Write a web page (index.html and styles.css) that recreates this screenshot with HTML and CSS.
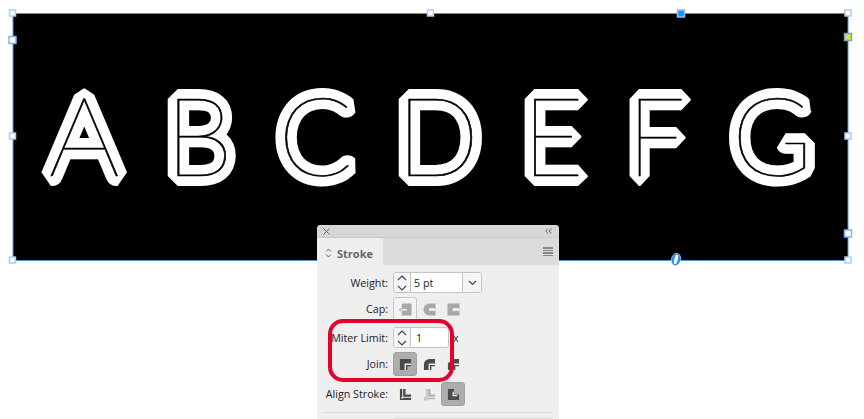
FILE: index.html
```html
<!DOCTYPE html>
<html lang="en">
<head>
<meta charset="utf-8">
<title>Stroke panel</title>
<link rel="stylesheet" href="styles.css">
</head>
<body>
<div class="stage">
  <svg class="art" width="864" height="419" viewBox="0 0 864 419">
    <rect class="plate" x="13" y="13.500" width="835" height="247"/>
    <use class="halo" href="#letters"/>
    <g class="core">
      <g id="letters">
        <text class="glyph" transform="translate(48.500 176) scale(1.020 1)">A</text>
        <text class="glyph" x="165" y="176">B</text>
        <text class="glyph" x="278" y="176">C</text>
        <text class="glyph" x="396" y="176">D</text>
        <text class="glyph" transform="translate(522 176) scale(.970 1)">E</text>
        <text class="glyph" transform="translate(627 176) scale(.940 1)">F</text>
        <text class="glyph" x="731.500" y="176">G</text>
      </g>
    </g>
    <rect class="handle" x="9.500" y="10" width="6" height="6"/>
    <rect class="handle big" x="9" y="36.500" width="7" height="7"/>
    <rect class="handle" x="9.500" y="133" width="6" height="6"/>
    <rect class="handle" x="9.500" y="257" width="6" height="6"/>
    <rect class="handle" x="427.500" y="10" width="6" height="6"/>
    <rect class="handle blue" x="677.500" y="10" width="7" height="7"/>
    <rect class="handle" x="845" y="10" width="6" height="6"/>
    <rect class="handle yellow" x="844.500" y="33.500" width="7" height="7"/>
    <rect class="handle" x="845" y="133" width="6" height="6"/>
    <rect class="handle big" x="844.500" y="230" width="7" height="7"/>
    <rect class="handle" x="845" y="257" width="6" height="6"/>
    <ellipse class="zero-o" cx="676" cy="259.500" rx="4.600" ry="6.200" transform="rotate(14 676 259.500)"/>
    <ellipse class="zero-i" cx="676" cy="259.500" rx="1.700" ry="4.800" transform="rotate(14 676 259.500)"/>
  </svg>

  <svg class="defs" width="0" height="0">
    <symbol id="cap-butt" viewBox="0 0 14 14"><path d="M3 .5h10.500v13H3V8H1.800V6H3z"/><path class="cut" d="M.5 6.500h8v1.800h-8z"/><circle cx="1.500" cy="7.300" r="1.300"/><circle class="cut" cx="1.500" cy="7.300" r=".6"/></symbol>
    <symbol id="cap-round" viewBox="0 0 14 14"><path d="M7 .5h6.500v13H7A6.500 6.500 0 0 1 7 .5z"/><path class="cut" d="M6.500 5.500h7v3h-7z"/></symbol>
    <symbol id="cap-square" viewBox="0 0 14 14"><path d="M.5 .5h13v13H.5z"/><path class="cut" d="M6 5.500h7.500v3H6z"/></symbol>
    <symbol id="join-miter" viewBox="0 0 14 14"><path d="M1 1h12v8H9v4H1z"/><path class="cut" d="M6 6h7v1.500H7.500V13H6z"/></symbol>
    <symbol id="join-round" viewBox="0 0 14 14"><path d="M7 1h6v8H9v4H1V7a6 6 0 0 1 6-6z"/><path class="cut" d="M6 6h7v1.500H7.500V13H6z"/></symbol>
    <symbol id="join-bevel" viewBox="0 0 14 14"><path d="M6 1h7v8H9v4H1V6z"/><path class="cut" d="M6 6h7v1.500H7.500V13H6z"/></symbol>
    <symbol id="align-center" viewBox="0 0 14 14"><path d="M1 1h6v6h6v6H1z"/><path class="cut" d="M3.500 1h1v8.500H13v1H3.500z"/><circle class="cut" cx="3.500" cy="10.500" r="1"/></symbol>
    <symbol id="align-inside" viewBox="0 0 14 14"><path d="M3 1h5v6h5v5H3z"/><path class="cut" d="M3.800 1h1v8.500H13v1H3.800z"/><circle cx="2.800" cy="11.500" r="2"/><circle class="cut" cx="2.800" cy="11.500" r="1"/></symbol>
    <symbol id="align-outside" viewBox="0 0 14 14"><path d="M1 1h6.500v6H13v6H1z"/><path class="cut" d="M6 4h1.300v3.500H11v1.300H6z"/></symbol>
    <symbol id="chev-updown" viewBox="0 0 12 18"><path class="line" d="M2 6l4-4 4 4M2 12l4 4 4-4"/></symbol>
  </svg>

  <section class="panel">
    <header class="titlebar">
      <svg class="tb-icon" width="7" height="7" viewBox="0 0 7 7"><path d="M.5 .5l6 6M6.500 .5l-6 6"/></svg>
      <svg class="tb-icon" width="7" height="6" viewBox="0 0 7 6"><path d="M3 .5L.7 3 3 5.500M6.500 .5L4.200 3l2.300 2.500"/></svg>
    </header>
    <div class="tabs">
      <div class="tab">
        <svg class="tab-arrows" width="7" height="10" viewBox="0 0 7 10"><path d="M1 3.500l2.500-2.500 2.500 2.500M1 6.500l2.500 2.500 2.500-2.500"/></svg>
        <span>Stroke</span>
      </div>
      <div class="menu"><i></i><i></i><i></i><i></i></div>
    </div>
    <div class="body">
      <div class="row row-weight">
        <label>Weight:</label>
        <div class="field">
          <span class="stepper"><svg width="12" height="18"><use href="#chev-updown"/></svg></span>
          <span class="value wide">5 pt</span>
          <span class="drop"><svg width="9" height="6" viewBox="0 0 9 6"><path d="M1 1l3.500 3.500L8 1"/></svg></span>
        </div>
      </div>
      <div class="row row-cap">
        <label>Cap:</label>
        <div class="icons light">
          <span class="ibtn raised"><svg><use href="#cap-butt"/></svg></span>
          <span class="ibtn"><svg><use href="#cap-round"/></svg></span>
          <span class="ibtn"><svg><use href="#cap-square"/></svg></span>
        </div>
      </div>
      <div class="row row-miter">
        <label>Miter Limit:</label>
        <div class="field">
          <span class="stepper"><svg width="12" height="18"><use href="#chev-updown"/></svg></span>
          <span class="value narrow">1</span>
        </div>
        <span class="unit">x</span>
      </div>
      <div class="row row-join">
        <label>Join:</label>
        <div class="icons dark">
          <span class="ibtn pressed"><svg><use href="#join-miter"/></svg></span>
          <span class="ibtn"><svg><use href="#join-round"/></svg></span>
          <span class="ibtn"><svg><use href="#join-bevel"/></svg></span>
        </div>
      </div>
      <div class="row row-align">
        <label>Align Stroke:</label>
        <div class="icons dark">
          <span class="ibtn"><svg><use href="#align-center"/></svg></span>
          <span class="ibtn faded"><svg><use href="#align-inside"/></svg></span>
          <span class="ibtn pressed"><svg><use href="#align-outside"/></svg></span>
        </div>
      </div>
      <hr class="sep">
      <div class="next"></div>
    </div>
    <div class="callout"></div>
  </section>
</div>
</body>
</html>
```

FILE: styles.css
```css
* { box-sizing: border-box; }
html, body { margin: 0; padding: 0; background: #fff; }
.stage { position: relative; width: 864px; height: 419px; overflow: hidden; font-family: "Open Sans", "Liberation Sans", sans-serif; }
.art { position: absolute; left: 0; top: 0; display: block; }
.defs { position: absolute; }
.plate { fill: #000; stroke: #5b94d6; stroke-width: 1; }
.glyph {
  font-family: "Lato", sans-serif;
  font-weight: 100;
  font-size: 110px;
}
.halo { fill: #fff; stroke: #fff; stroke-width: 20px; stroke-linejoin: bevel; }
.core { fill: #000; stroke: #000; stroke-width: .7px; }
.handle { fill: #fff; stroke: #a9cdf5; stroke-width: 1.500; }
.handle.big { stroke: #7fb2ee; }
.handle.blue { fill: #1e90ff; stroke: #8cc2f8; }
.handle.yellow { fill: #f6dc12; stroke: #6aa7e8; }
.zero-o { fill: #2a8ef0; stroke: #cfe4fb; stroke-width: .6; }
.zero-i { fill: #fff; }

.panel { position: absolute; left: 317px; top: 225px; width: 242px; height: 194px; background: #efefef; border-radius: 4px 4px 0 0; color: #222; overflow: hidden; }
.titlebar { height: 13px; background: #d6d6d6; display: flex; align-items: center; justify-content: space-between; padding: 0 7px 0 6px; border-bottom: 1px solid #c9c9c9; }
.tb-icon path { fill: none; stroke: #666; stroke-width: 1; }
.tabs { height: 27px; background: #dcdcdc; display: flex; justify-content: space-between; align-items: center; }
.tab { width: 66px; height: 27px; background: #efefef; display: flex; align-items: center; gap: 5px; padding: 3px 0 0 8px; font-size: 11px; font-weight: 700; color: #666; }
.tab-arrows path { fill: none; stroke: #666; stroke-width: 1; }
.menu { display: flex; flex-direction: column; gap: 1px; margin-right: 6px; }
.menu i { display: block; width: 10px; height: 1.500px; background: #888; }

.body { padding-top: 7px; position: relative; }
.row { display: flex; align-items: center; height: 21px; }
.row label { width: 71px; text-align: right; font-size: 10.700px; color: #222; flex: none; }
.field { margin-left: 5px; display: flex; height: 21px; background: #fff; border: 1px solid #c4c4c4; border-radius: 3px; font-size: 10.700px; overflow: hidden; }
.stepper { width: 17px; background: #f5f5f5; border-right: 1px solid #c4c4c4; display: flex; align-items: center; justify-content: center; }
.line, .drop path { fill: none; stroke: #444; stroke-width: 1.100; }
.value { display: flex; align-items: center; padding-left: 3px; }
.value.wide { width: 52px; border-right: 1px solid #c4c4c4; }
.value.narrow { width: 37px; padding-left: 5px; }
.drop { width: 18px; background: #f5f5f5; display: flex; align-items: center; justify-content: center; }
.unit { margin-left: 4px; font-size: 10.700px; }
.icons { margin-left: 5px; display: flex; }
.ibtn { width: 24px; height: 24px; display: flex; align-items: center; justify-content: center; border-radius: 3px; }
.ibtn svg { width: 13px; height: 13px; }
.icons.light svg { fill: #a8a8a8; }
.icons.dark svg { fill: #4a4a4a; }
.cut { fill: #efefef; }
.ibtn.raised { background: #f3f3f3; border: 1px solid #c8c8c8; }
.ibtn.raised .cut { fill: #f3f3f3; }
.ibtn.pressed { background: #adadad; border: 1px solid #a0a0a0; }
.ibtn.pressed .cut { fill: #adadad; }
.ibtn.faded svg { fill: #b4b4b4; }
.row-cap { margin-top: 5px; height: 22px; }
.row-miter { margin-top: 7px; }
.row-join { margin-top: 4px; height: 24px; }
.row-align { margin-top: 6px; height: 24px; }
.sep { margin: 6px 6px 0; border: 0; border-top: 1px solid #dadada; }
.next { margin: 4px 0 0 76px; width: 160px; height: 10px; background: #e4e4e4; border-radius: 2px; }
.callout { position: absolute; left: 10.500px; top: 94px; width: 126px; height: 63px; border: 4px solid #e3002b; border-radius: 15px; }
```
